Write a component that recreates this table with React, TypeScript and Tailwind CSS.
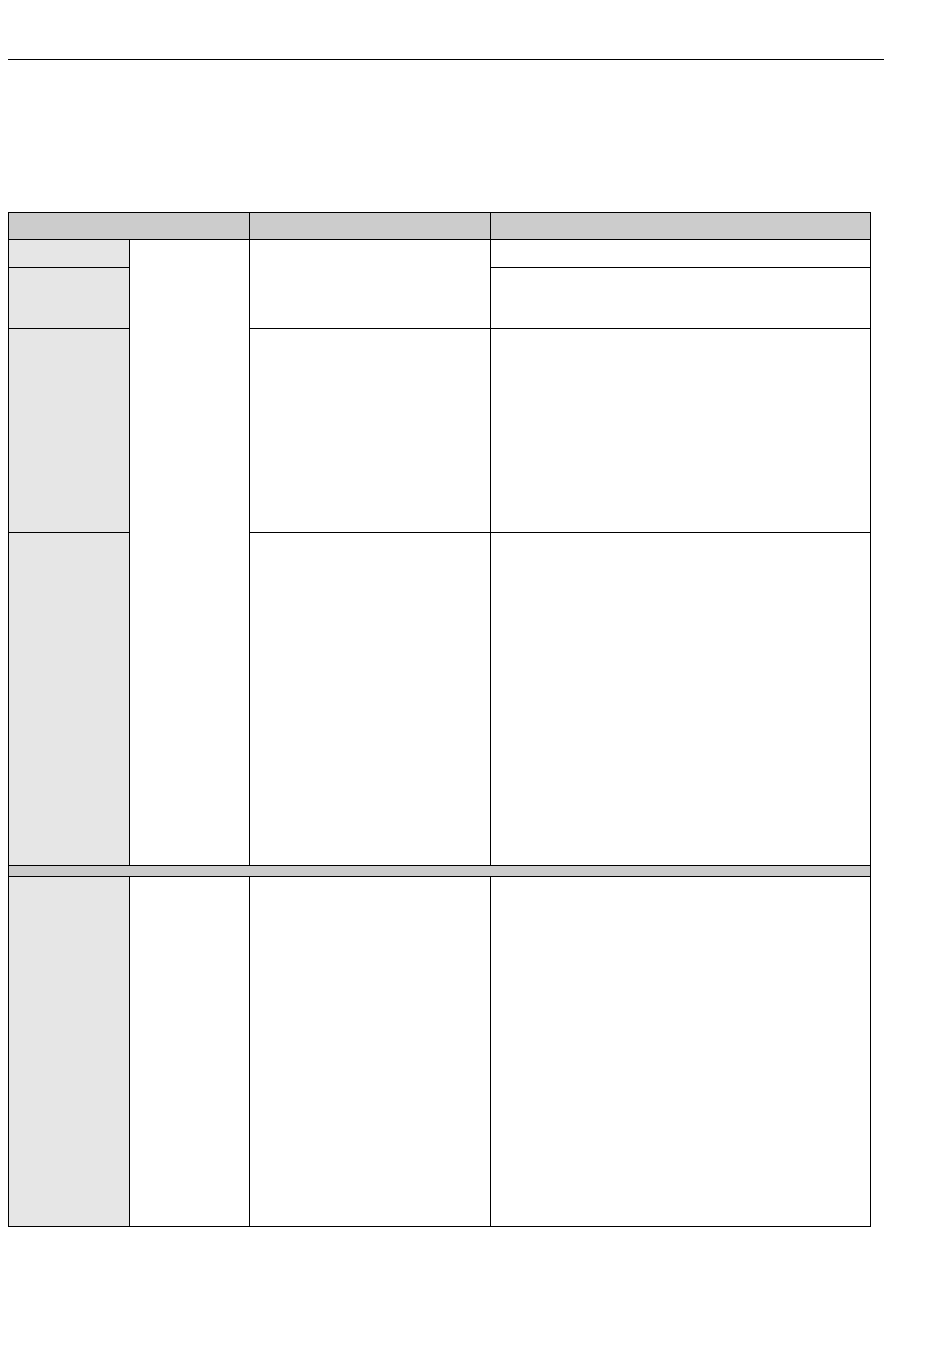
import React from "react";

export default function App() {
  const g1 = "bg-[#e6e6e6]";
  const hd = "bg-[#cccccc]";
  const w = "bg-white";
  return (
    <div className="min-h-[1369px] w-[950px] bg-white pt-[59px] pl-[8px]" style={{ fontFamily: '"Liberation Sans", Arial, sans-serif' }}>
      <div className="h-px w-[876px] bg-black" />
      <div className="mt-[152px] grid w-[863px] grid-cols-[120px_119px_240px_379px] grid-rows-[26px_27px_60px_203px_332px_10px_349px] gap-px bg-black p-px">
        <div className={`${hd} col-span-2`} />
        <div className={hd} />
        <div className={hd} />

        <div className={g1} />
        <div className={`${w} row-span-4`} />
        <div className={`${w} row-span-2`} />
        <div className={w} />

        <div className={g1} />
        <div className={w} />

        <div className={g1} />
        <div className={w} />
        <div className={w} />

        <div className={g1} />
        <div className={w} />
        <div className={w} />

        <div className={`${hd} col-span-4`} />

        <div className={g1} />
        <div className={w} />
        <div className={w} />
        <div className={w} />
      </div>
    </div>
  );
}
